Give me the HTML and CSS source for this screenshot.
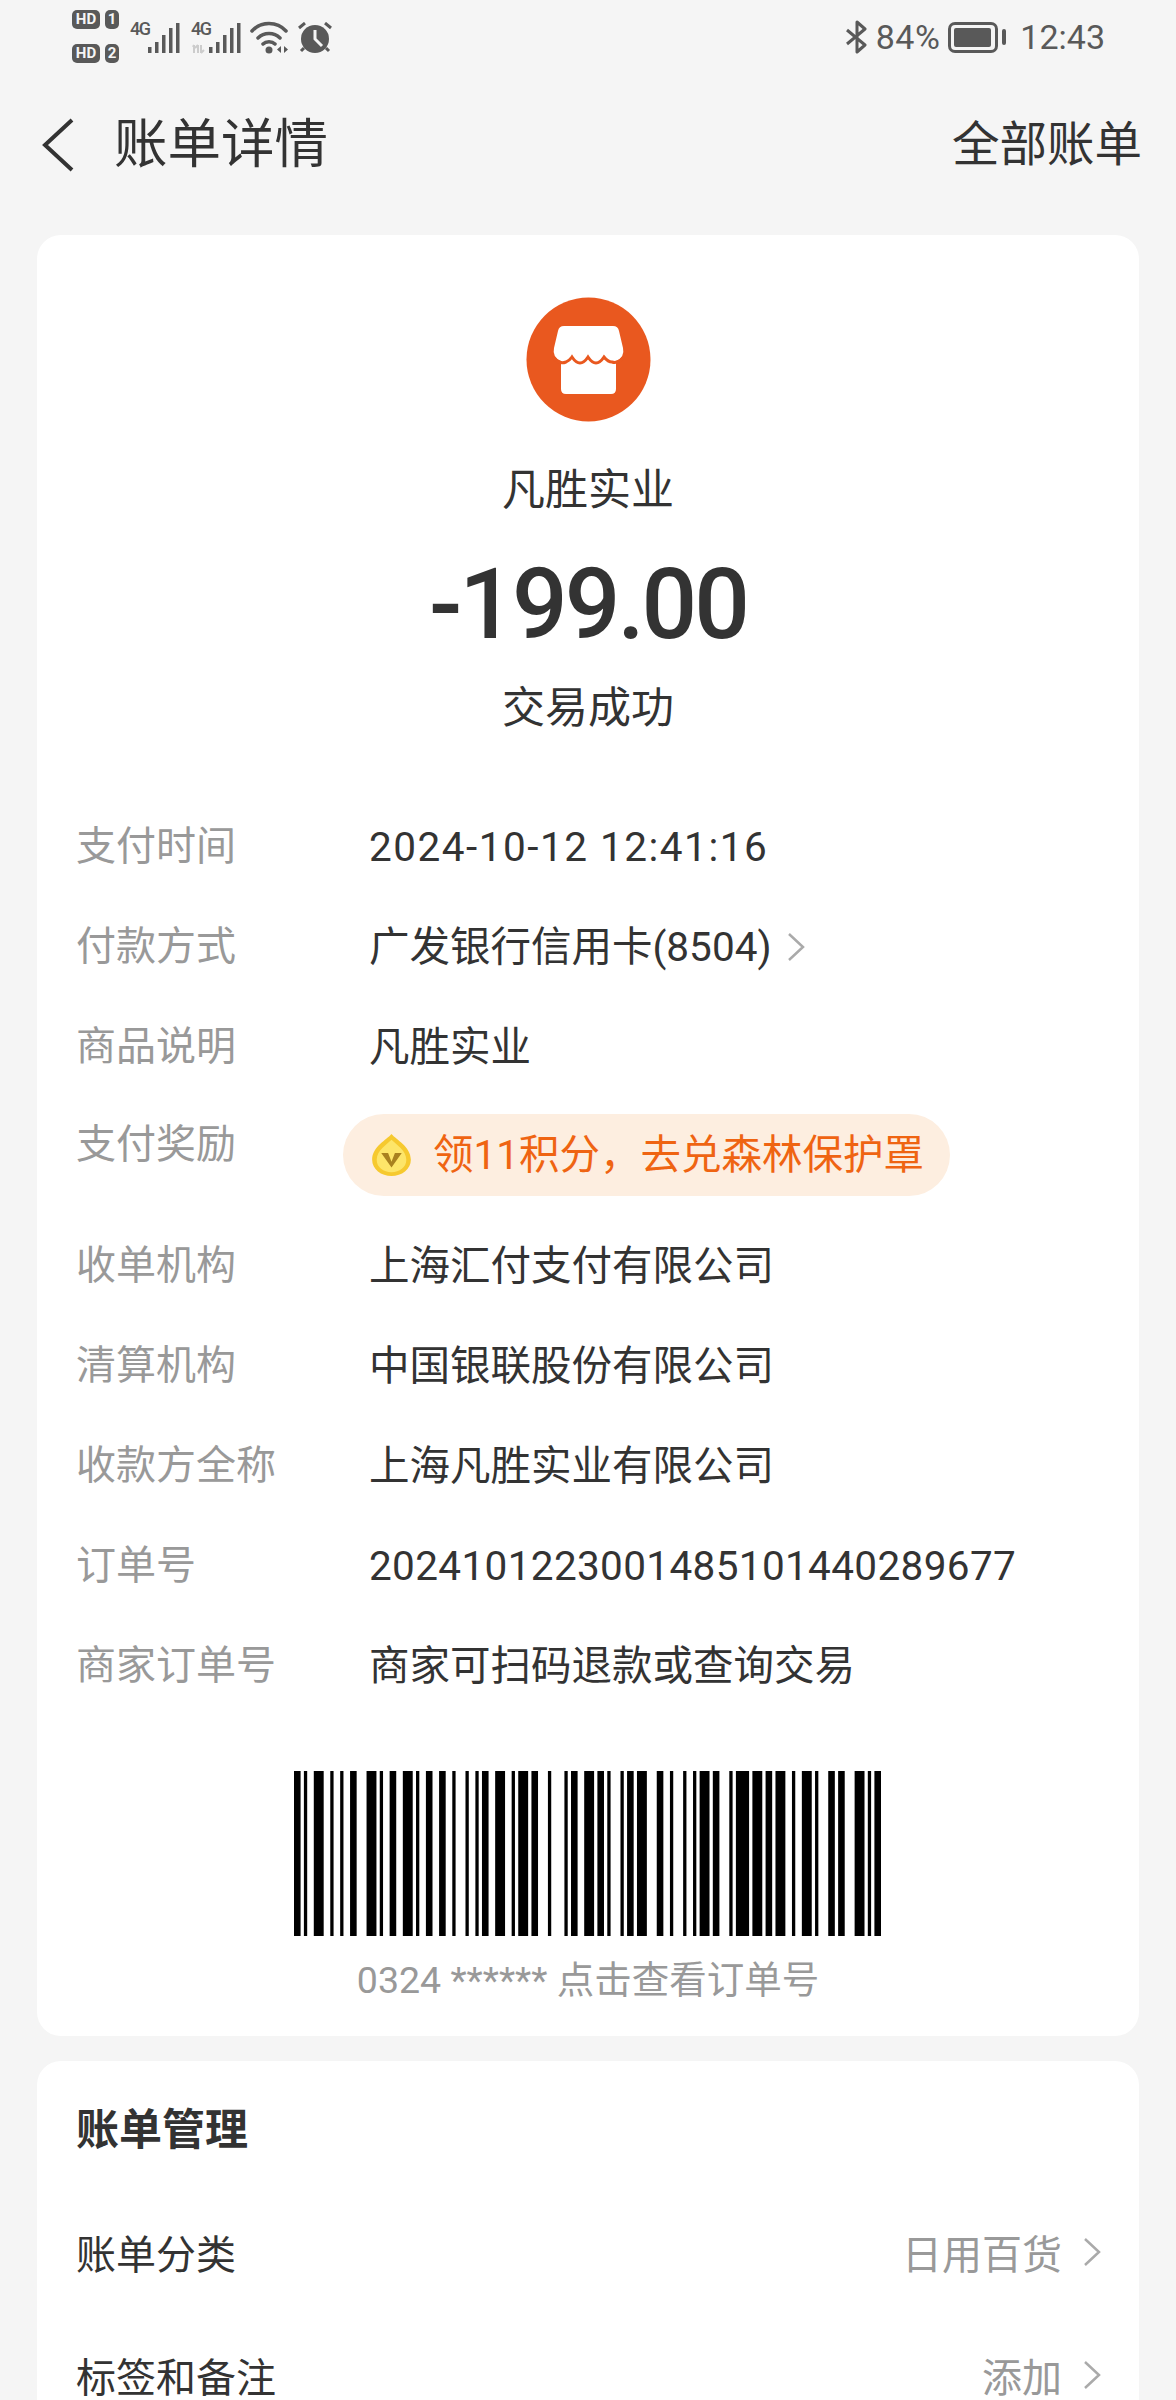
FILE: index.html

```html
<!DOCTYPE html>
<html lang="zh-CN">
<head>
  <meta charset="UTF-8">
  <meta name="viewport" content="width=device-width, initial-scale=1.0">
  <title>账单详情</title>
  <link rel="stylesheet" href="styles.css">
</head>
<body>

  <div class="status-bar">
    <div class="status-left">
      <div class="hd-group">
        <div class="hd-row"><span class="hd">HD</span><span class="sim">1</span></div>
        <div class="hd-row"><span class="hd">HD</span><span class="sim">2</span></div>
      </div>
      <div class="signal">
        <span class="net">4G</span>
        <svg class="bars" width="33" height="32" viewBox="0 0 33 32"><path d="M1 25h3.500v6h-3.500zM8 20h3.500v11h-3.500zM15 13h3.500v18h-3.500zM22 6h3.500v25h-3.500zM29 1h3.500v30h-3.500z"/></svg>
      </div>
      <div class="signal">
        <span class="net">4G</span>
        <svg class="bars" width="33" height="32" viewBox="0 0 33 32"><path d="M1 25h3.500v6h-3.500zM8 20h3.500v11h-3.500zM15 13h3.500v18h-3.500zM22 6h3.500v25h-3.500zM29 1h3.500v30h-3.500z"/></svg>
        <svg class="sub-arrows" width="15" height="10" viewBox="0 0 15 10"><path d="M2 1v8M1 3l1-2M6 1v8M6 1l-3 3M9 1v8M9 9l3-3" fill="none" stroke="#ccc" stroke-width="2"/></svg>
      </div>
      <svg class="wifi" width="40" height="34" viewBox="0 0 40 34">
        <path d="M2 10C11 0 27 0 36 10M8 17c6-6 16-6 22 0M13 23c3-3 9-3 12 0" fill="none" stroke="#595959" stroke-width="3.500" stroke-linecap="round"/>
        <circle cx="19" cy="29" r="3.500" fill="#595959"/>
        <path d="M31 25v7l-4-3.500zM34 25v7l4-3.500z" fill="#595959"/>
      </svg>
      <svg class="alarm" width="34" height="32" viewBox="0 0 34 32">
        <circle cx="17" cy="17" r="14" fill="#595959"/>
        <path d="M17 8v9l7 7" fill="none" stroke="#f5f5f5" stroke-width="3"/>
        <path d="M1 6l6-5M33 6l-6-5M3 29l3-3M31 29l-3-3" fill="none" stroke="#595959" stroke-width="3"/>
      </svg>
    </div>
    <div class="status-right">
      <svg class="bluetooth" width="22" height="34" viewBox="0 0 22 34"><path d="M2 10l18 15-8 7V2l8 7L2 24" fill="none" stroke="#595959" stroke-width="3" stroke-linejoin="round"/></svg>
      <span class="percent">84%</span>
      <div class="battery"><div class="battery-body"><div class="battery-fill"></div></div><div class="battery-cap"></div></div>
      <span class="clock">12:43</span>
    </div>
  </div>

  <div class="nav">
    <div class="nav-left">
      <svg class="back" width="32" height="54" viewBox="0 0 32 54"><path d="M30 2L3 27l27 25" fill="none" stroke="#333" stroke-width="4"/></svg>
      <span class="nav-title">账单详情</span>
    </div>
    <span class="nav-all">全部账单</span>
  </div>

  <div class="card card-detail">
    <div class="summary">
      <svg class="shop-icon" width="125" height="125" viewBox="0 0 125 125">
        <circle cx="62.500" cy="62.500" r="62" fill="#e9581f"/>
        <path d="M38 29h49q5 0 6 5l4 17q2 9-7 13v28q0 5-5 5H40q-5 0-5-5V64q-9-4-7-13l4-17q1-5 6-5z" fill="#fff"/>
        <path d="M27 60Q33 68 40 65 44 63 46 60 50 66 54 66 58 66 62 60 66 66 70 66 74 66 78 60 82 65 86 65 92 67 98 60" fill="none" stroke="#e9581f" stroke-width="3"/>
      </svg>
      <div class="merchant">凡胜实业</div>
      <div class="amount">-199.00</div>
      <div class="pay-state">交易成功</div>
    </div>

    <div class="rows">
      <div class="row"><div class="label">支付时间</div><div class="value value-date">2024-10-12 12:41:16</div></div>
      <div class="row"><div class="label">付款方式</div><div class="value">广发银行信用卡(8504)
        <svg width="20" height="32" viewBox="0 0 20 32"><path d="M3 3l14 13L3 29" fill="none" stroke="#aaa" stroke-width="2.500"/></svg></div></div>
      <div class="row"><div class="label">商品说明</div><div class="value">凡胜实业</div></div>
      <div class="row row-reward">
        <div class="label">支付奖励</div>
        <div class="reward">
          <svg class="reward-icon" width="41" height="44" viewBox="0 0 36 46" preserveAspectRatio="none">
            <path d="M18 1c4 6 17 13 17 27 0 10-8 17-17 17S1 38 1 28C1 14 14 7 18 1z" fill="#f6c92f"/>
            <path d="M18 7c4 5 13 11 13 21 0 8-6 13-13 13S5 36 5 28C5 18 14 12 18 7z" fill="#fde569"/>
            <path d="M9 21h6l3 9 3-9h6l-9 15z" fill="#a9811f"/>
          </svg>
          <span>领11积分，去兑森林保护罩</span>
        </div>
      </div>
      <div class="row"><div class="label">收单机构</div><div class="value">上海汇付支付有限公司</div></div>
      <div class="row"><div class="label">清算机构</div><div class="value">中国银联股份有限公司</div></div>
      <div class="row"><div class="label">收款方全称</div><div class="value">上海凡胜实业有限公司</div></div>
      <div class="row"><div class="label">订单号</div><div class="value value-order">2024101223001485101440289677</div></div>
      <div class="row"><div class="label">商家订单号</div><div class="value">商家可扫码退款或查询交易</div></div>
    </div>

    <svg class="barcode" width="587" height="165" viewBox="0 0 178 50" preserveAspectRatio="none">
      <path d="M0 0h2v50h-2zM3 0h1v50h-1zM6 0h3v50h-3zM11 0h1v50h-1zM14 0h1v50h-1zM17 0h2v50h-2zM22 0h3v50h-3zM26 0h1v50h-1zM29 0h2v50h-2zM33 0h3v50h-3zM37 0h1v50h-1zM40 0h2v50h-2zM44 0h2v50h-2zM48 0h1v50h-1zM52 0h1v50h-1zM55 0h1v50h-1zM57 0h2v50h-2zM61 0h3v50h-3zM66 0h1v50h-1zM68 0h3v50h-3zM72 0h2v50h-2zM77 0h1v50h-1zM82 0h1v50h-1zM84 0h2v50h-2zM88 0h3v50h-3zM92 0h2v50h-2zM95 0h1v50h-1zM99 0h1v50h-1zM101 0h2v50h-2zM104 0h3v50h-3zM110 0h2v50h-2zM114 0h1v50h-1zM118 0h1v50h-1zM121 0h1v50h-1zM123 0h3v50h-3zM127 0h2v50h-2zM132 0h1v50h-1zM134 0h4v50h-4zM139 0h3v50h-3zM143 0h2v50h-2zM146 0h3v50h-3zM151 0h1v50h-1zM154 0h3v50h-3zM158 0h1v50h-1zM162 0h2v50h-2zM165 0h2v50h-2zM170 0h3v50h-3zM174 0h1v50h-1zM176 0h2v50h-2z" fill="#000"/>
    </svg>
    <div class="barcode-text">0324 ****** 点击查看订单号</div>
  </div>

  <div class="card card-manage">
    <div class="manage-title">账单管理</div>
    <div class="manage-row">
      <span>账单分类</span>
      <span class="manage-value">日用百货
        <svg width="20" height="32" viewBox="0 0 20 32"><path d="M3 3l14 13L3 29" fill="none" stroke="#aaa" stroke-width="2.500"/></svg></span>
    </div>
    <div class="manage-row">
      <span>标签和备注</span>
      <span class="manage-value">添加
        <svg width="20" height="32" viewBox="0 0 20 32"><path d="M3 3l14 13L3 29" fill="none" stroke="#aaa" stroke-width="2.500"/></svg></span>
    </div>
  </div>

</body>
</html>
```

FILE: styles.css

```css
* { box-sizing: border-box; margin: 0; padding: 0; }
body {
  font-family: Roboto, 'Noto Sans CJK SC', sans-serif;
  background: #f5f5f5;
  color: #333;
  height: 2400px;
  overflow: hidden;
}
.status-bar {
  height: 72px;
  padding: 0 71px 0 72px;
  display: flex;
  justify-content: space-between;
  align-items: center;
  color: #595959;
}
.status-left {
  display: flex;
  align-items: center;
}
.hd-group {
  display: flex;
  flex-direction: column;
  gap: 15px;
  margin-top: 1px;
}
.hd-row {
  display: flex;
  gap: 5px;
}
.hd, .sim {
  background: #595959;
  color: #f5f5f5;
  height: 19px;
  border-radius: 5px;
  font-size: 15px;
  font-weight: 700;
  line-height: 19px;
  text-align: center;
}
.hd { width: 28px; }
.sim { width: 14px; }
.signal {
  position: relative;
  display: flex;
  align-items: flex-end;
  width: 50px;
  height: 32px;
  margin-left: 11px;
  margin-top: 4px;
}
.net {
  width: 18px;
  font-size: 18px;
  font-weight: 500;
  line-height: 14px;
  letter-spacing: -1.500px;
  align-self: flex-start;
}
.bars {
  fill: #595959;
  margin-left: -1px;
}
.sub-arrows {
  position: absolute;
  left: 1px;
  bottom: 0;
}
.wifi { margin-left: 9px; margin-top: 3px; }
.alarm { margin-left: 8px; margin-top: 3px; }
.status-right {
  display: flex;
  align-items: center;
  font-size: 34px;
  margin-top: 2px;
}
.bluetooth { margin-right: 9px; }
.percent { margin-right: 8px; letter-spacing: 0.500px; }
.battery {
  display: flex;
  align-items: center;
  gap: 4px;
  margin-right: 14px;
}
.battery-body {
  width: 50px;
  height: 31px;
  border: 3px solid #595959;
  border-radius: 7px;
  padding: 3px;
}
.battery-fill {
  width: 37px;
  height: 100%;
  background: #595959;
  border-radius: 2px;
}
.battery-cap {
  width: 4px;
  height: 16px;
  background: #595959;
  border-radius: 2px;
}
.nav {
  height: 163px;
  padding: 0 34px 18px 42px;
  display: flex;
  justify-content: space-between;
  align-items: center;
}
.nav-left {
  display: flex;
  align-items: center;
}
.back { margin-right: 40px; }
.nav-title {
  font-size: 53.500px;
  line-height: 70px;
}
.nav-all {
  font-size: 47.500px;
  line-height: 70px;
}
.card {
  margin: 0 37px;
  background: #fff;
  border-radius: 24px;
}
.card-detail { padding: 62px 37px 26px 39px; }
.summary {
  display: flex;
  flex-direction: column;
  align-items: center;
  margin-left: -2px;
}
.merchant {
  margin-top: 38px;
  font-size: 43px;
  line-height: 60px;
}
.amount {
  margin-top: 25px;
  font-size: 98px;
  font-weight: 500;
  line-height: 120px;
  letter-spacing: -3px;
}
.pay-state {
  margin-top: 13px;
  font-size: 43px;
  line-height: 60px;
}
.rows { margin-top: 59px; }
.row {
  display: flex;
  font-size: 40px;
  line-height: 100px;
}
.label {
  width: 293px;
  color: #999;
}
.value {
  display: flex;
  align-items: center;
  gap: 14px;
  font-size: 40.500px;
}
.value-date { letter-spacing: 1.500px; }
.value-order { letter-spacing: 0.350px; }
.row-reward { height: 119px; }
.row-reward .label { line-height: 96px; }
.reward {
  height: 82px;
  margin: 17px 0 0 -26px;
  padding: 0 26px 0 28px;
  display: flex;
  align-items: center;
  gap: 21px;
  background: #fdeee0;
  border-radius: 41px;
  color: #ef6412;
  font-size: 40.500px;
  line-height: 82px;
}
.barcode {
  display: block;
  margin: 55px 0 0 218px;
}
.barcode-text {
  margin-top: 14px;
  margin-left: -2px;
  text-align: center;
  color: #999;
  font-size: 37.500px;
  line-height: 60px;
}
.card-manage {
  margin-top: 25px;
  padding: 39px 37px 0 39px;
}
.manage-title {
  font-size: 43px;
  font-weight: 700;
  line-height: 60px;
  margin-bottom: 30px;
}
.manage-row {
  display: flex;
  justify-content: space-between;
  align-items: center;
  height: 123px;
  font-size: 40px;
}
.manage-value {
  display: flex;
  align-items: center;
  gap: 20px;
  color: #999;
}
```
